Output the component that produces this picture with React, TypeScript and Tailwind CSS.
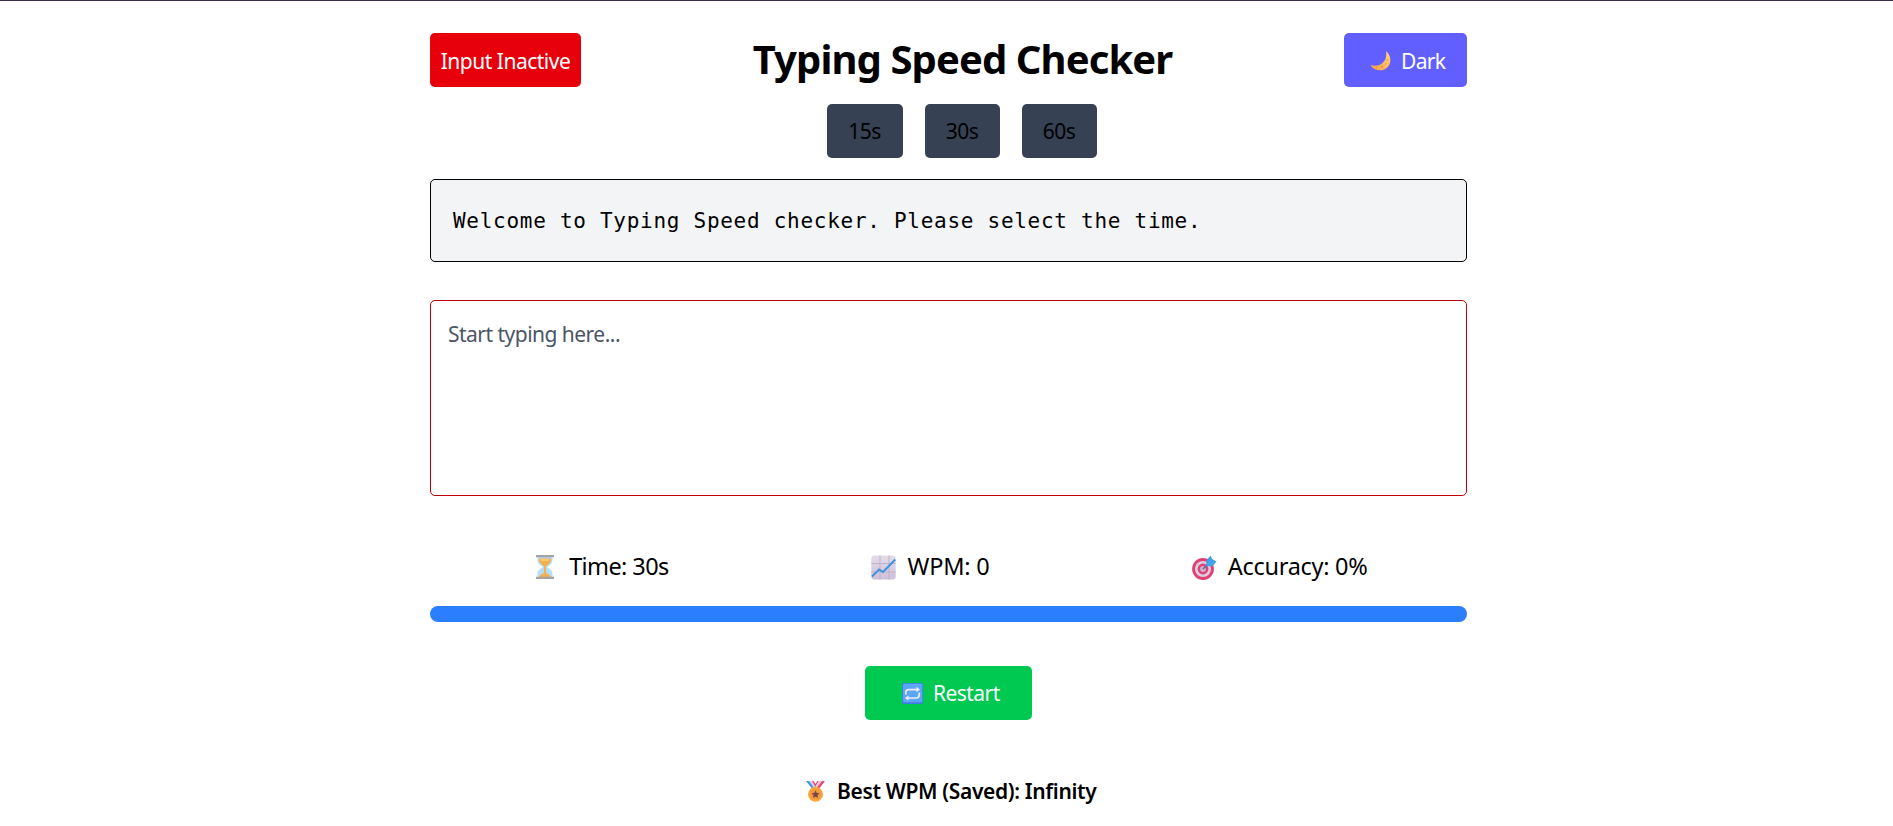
import React from 'react';

function MoonIcon() {
  return (
    <svg className="mt-[2px] h-[20px] w-[21px] shrink-0" viewBox="0 0 21 20">
      <defs>
        <linearGradient id="moon" x1="1" y1="0" x2="0" y2="1">
          <stop offset="0" stopColor="#ffd67a" />
          <stop offset="1" stopColor="#fba043" />
        </linearGradient>
      </defs>
      <path d="M16 0.300C21 4.200 21.800 11 18 15.700C13.800 20.600 4.800 21 0.400 14C6 15.800 11 14.500 14 10.500C16.400 7.200 16.600 3.600 16 0.300Z" fill="url(#moon)" />
      <circle cx="17.500" cy="9" r="1" fill="#f3a74c" />
      <circle cx="12" cy="15.500" r="1.200" fill="#ef9440" />
      <circle cx="6.500" cy="16.500" r="0.900" fill="#ef9440" />
      <circle cx="15.500" cy="13" r="0.800" fill="#f3a04a" />
    </svg>
  );
}

function HourglassIcon() {
  return (
    <svg className="h-[24px] w-[18px] shrink-0" viewBox="0 0 18 24">
      <path d="M1.500 1.500H16.500V5C16.500 9 13 10.500 11 12C13 13.500 16.500 15 16.500 19V22.500H1.500V19C1.500 15 5 13.500 7 12C5 10.500 1.500 9 1.500 5Z" fill="#b5dcfb" />
      <path d="M3 3.500H15V5.500C14.500 8.500 11.500 9.500 10 11.300V18C12 19 14.500 20 15 22.300H3C3.500 20 6 19 8 18V11.300C6.500 9.500 3.500 8.500 3 5.500Z" fill="#f3b04b" />
      <path d="M4.500 4H13.500L12.500 6H5Z" fill="#fbc867" />
      <path d="M0 0H18V2.200H0ZM0 21.800H18V24H0Z" fill="#a5a3a8" />
    </svg>
  );
}

function ChartIcon() {
  return (
    <svg className="h-[25px] w-[25px] shrink-0" viewBox="0 0 25 25">
      <defs>
        <linearGradient id="chart" x1="0" y1="0" x2="0" y2="1">
          <stop offset="0" stopColor="#e3dce9" />
          <stop offset="1" stopColor="#d0bfdc" />
        </linearGradient>
      </defs>
      <rect x="0.300" y="0.500" width="24.400" height="24" rx="3" fill="url(#chart)" />
      <path d="M9 0.500V24.500M18 0.500V24.500M0.300 8.500H24.700M0.300 17H24.700" stroke="#bcb0c7" strokeWidth="0.900" />
      <path d="M1 21.500L8 14.500L12 17L24.300 4.500" fill="none" stroke="#3b93dc" strokeWidth="1.900" />
    </svg>
  );
}

function TargetIcon() {
  return (
    <svg className="h-[25px] w-[25px] shrink-0" viewBox="0 0 25 25">
      <circle cx="11" cy="14" r="10.900" fill="#e2416f" />
      <circle cx="11" cy="14" r="8" fill="#dccfe4" />
      <circle cx="11" cy="14" r="5.400" fill="#e2416f" />
      <circle cx="11" cy="14" r="2.900" fill="#c9b5d2" />
      <path d="M11 14L17 8" stroke="#5b6c94" strokeWidth="1.600" />
      <path d="M14 11L14.500 5.500L18.500 0.500L20 4L24.500 6.500L20.500 11.300Z" fill="#3f9fe5" />
      <path d="M16 9.500L19 5.500M18 10L22 7" stroke="#62b5ef" strokeWidth="0.900" />
    </svg>
  );
}

function RepeatIcon() {
  return (
    <svg className="h-[21px] w-[21px] shrink-0" viewBox="0 0 21 21">
      <rect width="21" height="21" rx="1.500" fill="#3e7ee0" />
      <rect x="1" y="0.700" width="19.300" height="18.500" rx="1.200" fill="#5ba6fb" />
      <path d="M3.800 11.500V9.500Q3.800 6.600 6.800 6.600H15.500M17.300 9.500V11.500Q17.300 15 14.300 15H5.500" fill="none" stroke="#f0eafa" strokeWidth="1.700" />
      <path d="M14.500 3.700L18 6.600L14.500 9.300ZM6.500 12.200L3 15L6.500 17.800Z" fill="#f0eafa" />
    </svg>
  );
}

function MedalIcon() {
  return (
    <svg className="h-[21px] w-[19px] shrink-0" viewBox="0 0 19 21">
      <path d="M0 0H3.500L9 7H5.500Z" fill="#3f97e8" />
      <path d="M3 0H6L9.500 5L8 7Z" fill="#d9cfe6" />
      <path d="M6 0H7.500L9.500 3L11.500 0H13L9.500 6Z" fill="#e8416f" />
      <path d="M13 0H16L11 7L9.500 5Z" fill="#d9cfe6" />
      <path d="M16 0H19L13.500 7H10.500Z" fill="#ed4072" />
      <circle cx="9.500" cy="13.300" r="7.500" fill="#f8a83c" />
      <circle cx="9.500" cy="13.300" r="5.800" fill="#f09b3c" />
      <path d="M9.500 9.400L10.700 12L13.500 12.300L11.400 14.200L12 17L9.500 15.600L7 17L7.600 14.200L5.500 12.300L8.300 12Z" fill="#7b4150" />
    </svg>
  );
}

const durations = [
  { label: '15s', width: 'w-[76px]' },
  { label: '30s', width: 'w-[75px]' },
  { label: '60s', width: 'w-[75px]' },
];

export default function App() {
  return (
    <div className="min-h-[826px] border-t border-[#3b2f45] bg-white font-['Noto_Sans',sans-serif] text-[21px] leading-8 whitespace-nowrap text-black">
      <main className="ml-[430px] flex w-[1037px] flex-col pt-8">
        <header className="flex items-start justify-between">
          <div className="flex h-[54px] w-[151px] items-center justify-center rounded-[5px] bg-[#e7000b] pt-[2px] tracking-[-0.5px] text-white">
            Input Inactive
          </div>
          <div className="flex flex-col items-center">
            <h1 className="flex h-[54px] items-center pb-[2px] text-[40px] font-bold tracking-[-0.9px]">Typing Speed Checker</h1>
            <div className="mt-[17px] flex gap-[22px] pr-[2px]">
              {durations.map((d) => (
                <button key={d.label} className={`${d.width} h-[54px] rounded-[5px] bg-[#364153] tracking-[-0.5px]`}>
                  {d.label}
                </button>
              ))}
            </div>
          </div>
          <button className="flex h-[54px] w-[123px] items-center rounded-[5px] bg-[#615fff] pl-[26px] text-white">
            <MoonIcon />
            <span className="mt-[2px] ml-[10px] tracking-[-0.65px]">Dark</span>
          </button>
        </header>

        <p className="mt-[21px] flex h-[83px] items-center rounded-[5px] border border-black bg-gray-100 pl-[22px] font-['DejaVu_Sans_Mono',monospace] text-[21px] tracking-[0.72px]">
          Welcome to Typing Speed checker. Please select the time.
        </p>

        <textarea
          className="mt-[38px] h-[196px] resize-none rounded-[5px] border border-[#c10007] px-[17px] pt-[17px] tracking-[-0.52px] placeholder:text-[#4a5565]"
          placeholder="Start typing here..."
        />

        <div className="mt-[53px] flex h-9 items-center justify-around text-[23.500px]">
          <div className="flex w-[138px] items-center pl-[6px]">
            <HourglassIcon />
            <span className="-mt-[2px] ml-[15px] tracking-[-0.6px]">Time: 30s</span>
          </div>
          <div className="flex w-[120px] items-center pl-[3px]">
            <ChartIcon />
            <span className="-mt-[2px] ml-[11px] tracking-[-0.2px]">WPM: 0</span>
          </div>
          <div className="flex w-[178px] items-center pl-[3px]">
            <TargetIcon />
            <span className="-mt-[2px] ml-[11px] tracking-[-0.3px]">Accuracy: 0%</span>
          </div>
        </div>

        <div className="mt-[21px] h-4 rounded-full bg-[#2b7fff]" />

        <button className="mt-[44px] flex h-[54px] w-[167px] items-center self-center rounded-[5px] bg-[#00c951] pl-[37px] text-white">
          <RepeatIcon />
          <span className="ml-[10px] tracking-[-0.55px]">Restart</span>
        </button>

        <div className="mt-[55px] flex h-8 items-center pl-[376px] font-semibold">
          <MedalIcon />
          <span className="ml-[12px] tracking-[-0.34px]">Best WPM (Saved): Infinity</span>
        </div>
      </main>
    </div>
  );
}
